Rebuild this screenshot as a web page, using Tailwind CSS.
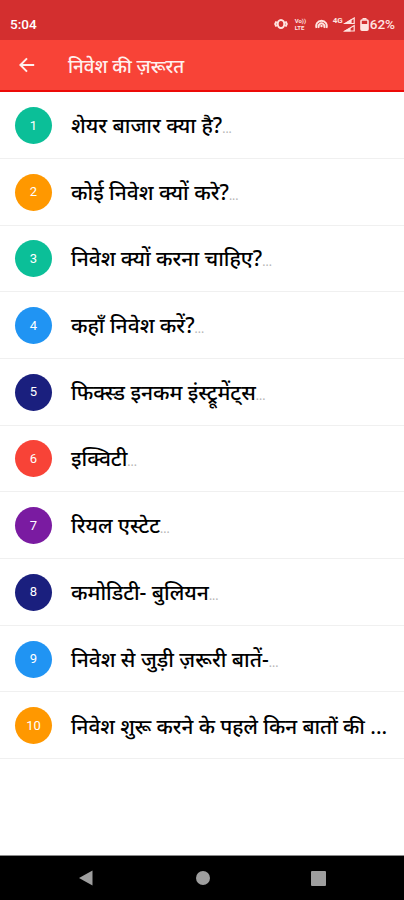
<!DOCTYPE html>
<html lang="hi">
<head>
  <meta charset="UTF-8">
  <meta name="viewport" content="width=device-width, initial-scale=1.0">
  <title>निवेश की ज़रूरत</title>
  <script src="https://cdn.jsdelivr.net/npm/@tailwindcss/browser@4"></script>
</head>
<body class="bg-white">
<div class="flex flex-col w-[404px] h-[900px] overflow-hidden font-['Roboto','Noto_Sans',sans-serif]">

  <!-- Status bar -->
  <div class="h-[39.5px] shrink-0 bg-[#d32f2f] flex items-center justify-between pt-[9px] pl-[10px] pr-[9px] text-white">
    <span class="text-[13.5px] leading-none font-medium">5:04</span>
    <div class="flex items-center text-[#ffe4e0]">
      <svg class="w-[14px] h-[12px] mr-[7px]" viewBox="0 0 14 12" fill="none" stroke="currentColor" stroke-width="2">
        <ellipse cx="7" cy="6" rx="3.3" ry="4"/>
        <path d="M2.4 3.4 1.2 6l1.2 2.6M11.6 3.4 12.8 6l-1.2 2.6"/>
      </svg>
      <div class="w-[14px] mr-[6px] text-[6px] leading-[7px] font-bold">
        <div>Vo))</div>
        <div>LTE</div>
      </div>
      <svg class="w-[13px] h-[12px] mr-[5px]" viewBox="0 0 13 12" fill="none" stroke="currentColor" stroke-width="1.9">
        <path d="M1.6 10A5.3 5.3 0 1 1 11.4 10"/>
        <path d="M4 9.8A2.9 2.9 0 1 1 9 9.8"/>
        <circle cx="6.5" cy="8" r="1.2" fill="currentColor" stroke="none"/>
      </svg>
      <span class="text-[8px] leading-none font-bold self-start">4G</span>
      <svg class="w-[12px] h-[15px] mr-[5px]" viewBox="0 0 12 15" fill="none" stroke="currentColor" stroke-width="1.2">
        <path d="M11.2 1v5.5H2z"/>
        <path d="M8 3v3.5H2.5z" fill="currentColor"/>
        <path d="M11.2 8.5V14H2z"/>
        <path d="M7 11.5V14H2.5z" fill="currentColor"/>
      </svg>
      <svg class="w-[9px] h-[13px] mr-[1px]" viewBox="0 0 9 13" fill="none" stroke="currentColor">
        <path d="M2.5 .8h4" stroke-width="1.6"/>
        <rect x="1" y="2" width="7" height="10.2" rx="1" stroke-width="1.6"/>
        <rect x="1" y="6" width="7" height="6" fill="currentColor" stroke="none"/>
      </svg>
      <span class="text-[13.5px] leading-none font-medium">62%</span>
    </div>
  </div>

  <!-- App bar -->
  <div class="h-[52.7px] shrink-0 bg-[#f84337] border-b-2 border-[#ec0a08] flex items-center pl-[19px] text-[#fff0ee]">
    <svg class="w-[16px] h-[16px] mr-[33px]" viewBox="0 0 16 16" fill="none" stroke="currentColor" stroke-width="2">
      <path d="M15.2 8H1.8M8 1.4 1.4 8 8 14.6"/>
    </svg>
    <h1 class="pt-[5px] text-[18.7px] leading-none font-medium whitespace-nowrap">निवेश की ज़रूरत</h1>
  </div>

  <!-- Chapter list -->
  <ul class="text-[21px] leading-[24px] font-medium text-black">
    <li class="h-[66.7px] border-b border-[#f0f0f0] flex items-center pt-px pl-[15px]">
      <span class="size-[37px] shrink-0 mr-[19px] rounded-full bg-[#0bbf98] flex items-center justify-center text-[13px] font-normal text-white">1</span>
      <span class="pt-[3px] font-['Noto_Sans',sans-serif] whitespace-nowrap">शेयर बाजार क्या है?<span class="text-[12px] font-normal text-[#b5b5b5]">...</span></span>
    </li>
    <li class="h-[66.7px] border-b border-[#f0f0f0] flex items-center pt-px pl-[15px]">
      <span class="size-[37px] shrink-0 mr-[19px] rounded-full bg-[#ff9800] flex items-center justify-center text-[13px] font-normal text-white">2</span>
      <span class="pt-[3px] font-['Noto_Sans',sans-serif] whitespace-nowrap">कोई निवेश क्यों करे?<span class="text-[12px] font-normal text-[#b5b5b5]">...</span></span>
    </li>
    <li class="h-[66.7px] border-b border-[#f0f0f0] flex items-center pt-px pl-[15px]">
      <span class="size-[37px] shrink-0 mr-[19px] rounded-full bg-[#0bbf98] flex items-center justify-center text-[13px] font-normal text-white">3</span>
      <span class="pt-[3px] font-['Noto_Sans',sans-serif] whitespace-nowrap">निवेश क्यों करना चाहिए?<span class="text-[12px] font-normal text-[#b5b5b5]">...</span></span>
    </li>
    <li class="h-[66.7px] border-b border-[#f0f0f0] flex items-center pt-px pl-[15px]">
      <span class="size-[37px] shrink-0 mr-[19px] rounded-full bg-[#2094f3] flex items-center justify-center text-[13px] font-normal text-white">4</span>
      <span class="pt-[3px] font-['Noto_Sans',sans-serif] whitespace-nowrap">कहाँ निवेश करें?<span class="text-[12px] font-normal text-[#b5b5b5]">...</span></span>
    </li>
    <li class="h-[66.7px] border-b border-[#f0f0f0] flex items-center pt-px pl-[15px]">
      <span class="size-[37px] shrink-0 mr-[19px] rounded-full bg-[#1a1f7e] flex items-center justify-center text-[13px] font-normal text-white">5</span>
      <span class="pt-[3px] font-['Noto_Sans',sans-serif] whitespace-nowrap">फिक्स्ड इनकम इंस्ट्रूमेंट्स<span class="text-[12px] font-normal text-[#b5b5b5]">...</span></span>
    </li>
    <li class="h-[66.7px] border-b border-[#f0f0f0] flex items-center pt-px pl-[15px]">
      <span class="size-[37px] shrink-0 mr-[19px] rounded-full bg-[#f84337] flex items-center justify-center text-[13px] font-normal text-white">6</span>
      <span class="pt-[3px] font-['Noto_Sans',sans-serif] whitespace-nowrap">इक्विटी<span class="text-[12px] font-normal text-[#b5b5b5]">...</span></span>
    </li>
    <li class="h-[66.7px] border-b border-[#f0f0f0] flex items-center pt-px pl-[15px]">
      <span class="size-[37px] shrink-0 mr-[19px] rounded-full bg-[#7a1ba1] flex items-center justify-center text-[13px] font-normal text-white">7</span>
      <span class="pt-[3px] font-['Noto_Sans',sans-serif] whitespace-nowrap">रियल एस्टेट<span class="text-[12px] font-normal text-[#b5b5b5]">...</span></span>
    </li>
    <li class="h-[66.7px] border-b border-[#f0f0f0] flex items-center pt-px pl-[15px]">
      <span class="size-[37px] shrink-0 mr-[19px] rounded-full bg-[#1a1f7e] flex items-center justify-center text-[13px] font-normal text-white">8</span>
      <span class="pt-[3px] font-['Noto_Sans',sans-serif] whitespace-nowrap">कमोडिटी- बुलियन<span class="text-[12px] font-normal text-[#b5b5b5]">...</span></span>
    </li>
    <li class="h-[66.7px] border-b border-[#f0f0f0] flex items-center pt-px pl-[15px]">
      <span class="size-[37px] shrink-0 mr-[19px] rounded-full bg-[#2094f3] flex items-center justify-center text-[13px] font-normal text-white">9</span>
      <span class="pt-[3px] font-['Noto_Sans',sans-serif] whitespace-nowrap">निवेश से जुड़ी ज़रूरी बातें-<span class="text-[12px] font-normal text-[#b5b5b5]">...</span></span>
    </li>
    <li class="h-[66.7px] border-b border-[#f0f0f0] flex items-center pt-px pl-[15px]">
      <span class="size-[37px] shrink-0 mr-[19px] rounded-full bg-[#ff9800] flex items-center justify-center text-[13px] font-normal text-white">10</span>
      <span class="pt-px text-[20.7px] font-['Noto_Sans',sans-serif] whitespace-nowrap">निवेश शुरू करने के पहले किन बातों की ...</span>
    </li>
  </ul>

  <!-- Navigation bar -->
  <div class="mt-auto h-[45px] shrink-0 bg-black border-t border-[#8a8a8a] flex items-center text-[#9e9e9e]">
    <svg class="w-[14px] h-[16px] ml-[79px]" viewBox="0 0 14 16" fill="currentColor"><path d="M13.5.5v15L0 8z"/></svg>
    <span class="size-[14px] ml-[102.5px] rounded-full bg-[#9e9e9e]"></span>
    <span class="size-[15px] ml-[101px] rounded-[1px] bg-[#9e9e9e]"></span>
  </div>

</div>
</body>
</html>
